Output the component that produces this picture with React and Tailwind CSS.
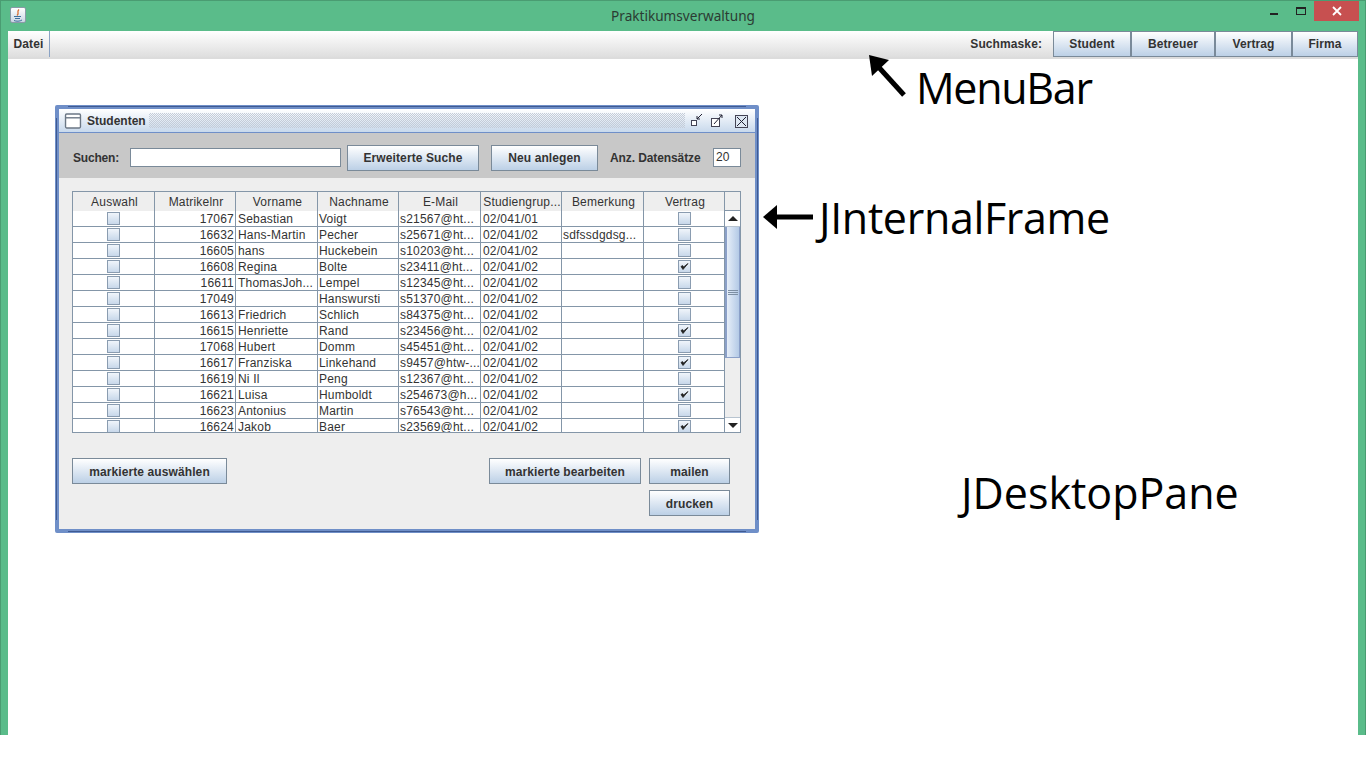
import React from "react";

const rows = [
  ["17067", "Sebastian", "Voigt", "s21567@ht...", "02/041/01", "", false],
  ["16632", "Hans-Martin", "Pecher", "s25671@ht...", "02/041/02", "sdfssdgdsg...", false],
  ["16605", "hans", "Huckebein", "s10203@ht...", "02/041/02", "", false],
  ["16608", "Regina", "Bolte", "s23411@ht...", "02/041/02", "", true],
  ["16611", "ThomasJoh...", "Lempel", "s12345@ht...", "02/041/02", "", false],
  ["17049", "", "Hanswursti", "s51370@ht...", "02/041/02", "", false],
  ["16613", "Friedrich", "Schlich", "s84375@ht...", "02/041/02", "", false],
  ["16615", "Henriette", "Rand", "s23456@ht...", "02/041/02", "", true],
  ["17068", "Hubert", "Domm", "s45451@ht...", "02/041/02", "", false],
  ["16617", "Franziska", "Linkehand", "s9457@htw-...", "02/041/02", "", true],
  ["16619", "Ni Il", "Peng", "s12367@ht...", "02/041/02", "", false],
  ["16621", "Luisa", "Humboldt", "s254673@h...", "02/041/02", "", true],
  ["16623", "Antonius", "Martin", "s76543@ht...", "02/041/02", "", false],
  ["16624", "Jakob", "Baer", "s23569@ht...", "02/041/02", "", true],
];

const heads = ["Auswahl", "Matrikelnr", "Vorname", "Nachname", "E-Mail", "Studiengrup...", "Bemerkung", "Vertrag"];
const cols = "grid grid-cols-[82px_81px_82px_81px_82px_81px_82px_81px]";
const btn = "h-[26px] pt-px flex items-center justify-center border border-[#7a8a99] bg-gradient-to-b from-white to-[#bcd0e6] text-[12px] font-bold text-[#333] tracking-[0.1px]";

function Box({ checked }) {
  return (
    <div className="w-[13px] h-[13px] border border-[#8a9cb0] bg-gradient-to-b from-[#f0f5fb] to-[#c8d8ea] flex items-center justify-center">
      {checked && (
        <svg width="9" height="9" viewBox="0 0 9 9">
          <path d="M1 4.5 L3 7.5 L8 1.5 L3.6 5 L2.6 3.6 Z" fill="#222" stroke="#222" strokeWidth="0.8" />
        </svg>
      )}
    </div>
  );
}

function Cell({ children, className = "pl-[1px] pr-[2px]" }) {
  return (
    <div className={"h-[16px] bg-white border-b border-r border-[#8496a8] leading-[17px] whitespace-nowrap overflow-hidden " + className}>
      {children}
    </div>
  );
}

function JavaIcon() {
  return (
    <div className="w-[16px] h-[16px] rounded-[2px] border border-[#8a9aa8] bg-gradient-to-b from-white to-[#c9d6e4] flex items-center justify-center">
      <svg width="12" height="13" viewBox="0 0 12 13">
        <path d="M7 0.5 C4 3 8 4 5 6.5" fill="none" stroke="#d8682a" strokeWidth="1.3" />
        <path d="M2 7.5 H9 M3 9.5 H8 M2 11.5 C4 12.5 8 12.5 10 11" fill="none" stroke="#3f6f9c" strokeWidth="1" />
      </svg>
    </div>
  );
}

function Frame() {
  return (
    <div className="absolute left-[47px] top-[46px] w-[704px] h-[428px] border-[4px] border-[#6f8fc8] rounded-[2px] flex flex-col bg-[#eeeeee] text-[12px] text-[#333] font-['Liberation_Sans',Arial,sans-serif]">
      <div className="absolute top-[-3px] left-[9px] right-[9px] h-px bg-[#3f5a92]" />
      <div className="absolute bottom-[-3px] left-[9px] right-[9px] h-px bg-[#3f5a92]" />
      <div className="absolute left-[-3px] top-[9px] bottom-[9px] w-px bg-[#3f5a92]" />
      <div className="absolute right-[-3px] top-[9px] bottom-[9px] w-px bg-[#3f5a92]" />
      <div className="h-[24px] shrink-0 border-b border-[#6f8fc8] bg-gradient-to-b from-white to-[#c8d9ec] flex items-center pl-[5px] pr-[6px]">
        <svg width="18" height="16" viewBox="0 0 16 15" className="shrink-0">
          <rect x="1" y="1" width="14" height="13" rx="1" fill="#fff" stroke="#6b7785" strokeWidth="1.3" />
          <path d="M1 4.5 H15" stroke="#6b7785" strokeWidth="1.3" />
        </svg>
        <span className="ml-[5px] w-[58px] font-bold text-[#333]">Studenten</span>
        <div className="ml-[4px] flex-1 h-[15px] bg-[conic-gradient(#c4ccd8_25%,transparent_0_50%,#c4ccd8_0_75%,transparent_0)] bg-[length:2px_2px]" />
        <svg width="60" height="18" viewBox="0 0 60 18" className="shrink-0 ml-[4px]">
          <rect x="2.5" y="8.5" width="5" height="5" fill="#fff" stroke="#445" />
          <path d="M8 7 L13 2 M8 7 H11 M8 7 V4" stroke="#223" fill="none" />
          <rect x="22.5" y="6.5" width="8" height="8" fill="#fff" stroke="#445" />
          <path d="M25 12 L33 3 M33 3 H30 M33 3 V6" stroke="#223" fill="none" />
          <rect x="46.5" y="3.5" width="12" height="12" fill="#dde7f2" stroke="#445" />
          <path d="M48 5 L57 14 M57 5 L48 14" stroke="#223" />
        </svg>
      </div>
      <div className="h-[45px] shrink-0 bg-[#c8c8c8] flex items-center pl-[14px] pt-[4px] font-bold text-[#333]">
        <span className="w-[57px] tracking-[-0.2px]">Suchen:</span>
        <div className="w-[211px] h-[19px] bg-white border border-[#7a8a99]" />
        <div className={btn + " w-[132px] ml-[6px]"}>Erweiterte Suche</div>
        <div className={btn + " w-[107px] ml-[12px]"}>Neu anlegen</div>
        <span className="ml-[12px] w-[103px] tracking-[-0.1px]">Anz. Datensätze</span>
        <div className="w-[28px] h-[19px] bg-white border border-[#7a8a99] font-normal px-[2px] leading-[17px]">20</div>
      </div>
      <div className="ml-[13px] mt-[13px] w-[669px] h-[242px] flex border border-[#8496a8] overflow-hidden shrink-0 tracking-[0.2px]">
        <div className="w-[652px] shrink-0">
          <div className={cols + " h-[19px]"}>
            {heads.map((h) => (
              <div key={h} className="border-r border-b border-[#8496a8] bg-[#eeeeee] text-center leading-[20px] whitespace-nowrap pl-[2px]">{h}</div>
            ))}
          </div>
          {rows.map((r) => (
            <div key={r[0]} className={cols}>
              <Cell className="flex justify-center items-start pt-[1px]"><Box /></Cell>
              <Cell className="text-right pr-[1px]">{r[0]}</Cell>
              <Cell className="pl-[2px] pr-[1px]">{r[1]}</Cell>
              <Cell>{r[2]}</Cell>
              <Cell>{r[3]}</Cell>
              <Cell className="pl-[2px] pr-[1px]">{r[4]}</Cell>
              <Cell>{r[5]}</Cell>
              <Cell className="flex justify-center pl-[1px] items-start pt-[1px]"><Box checked={r[6]} /></Cell>
            </div>
          ))}
        </div>
        <div className="flex-1 flex flex-col bg-[#eeeeee]">
          <div className="h-[19px] border-b border-[#8496a8] shrink-0" />
          <div className="h-[16px] shrink-0 bg-white flex items-center justify-center border-b border-[#b8c4d0]">
            <div className="w-0 h-0 border-x-[5px] border-x-transparent border-b-[5px] border-b-[#222]" />
          </div>
          <div className="h-[131px] shrink-0 bg-gradient-to-r from-[#e6eef8] to-[#b4cae6] border-l-2 border-b border-r border-[#8ba0c8] flex flex-col items-center justify-center gap-[1px]">
            <div className="w-[10px] h-px bg-[#7d8fa3]" />
            <div className="w-[10px] h-px bg-[#7d8fa3]" />
            <div className="w-[10px] h-px bg-[#7d8fa3]" />
          </div>
          <div className="flex-1" />
          <div className="h-[15px] shrink-0 bg-white flex items-center justify-center border-t border-[#b8c4d0]">
            <div className="w-0 h-0 border-x-[5px] border-x-transparent border-t-[5px] border-t-[#222]" />
          </div>
        </div>
      </div>
      <div className="mt-[25px] ml-[13px] mr-[25px] flex items-start">
        <div className={btn + " w-[155px]"}>markierte auswählen</div>
        <div className="flex-1" />
        <div className="flex flex-col items-end gap-[6px]">
          <div className="flex gap-[8px]">
            <div className={btn + " w-[152px]"}>markierte bearbeiten</div>
            <div className={btn + " w-[81px]"}>mailen</div>
          </div>
          <div className={btn + " w-[81px]"}>drucken</div>
        </div>
      </div>
    </div>
  );
}

export default function App() {
  return (
    <div className="w-[1366px] h-[768px] bg-white overflow-hidden">
      <div className="h-[735px] flex flex-col bg-[#5abc8a] px-[7px] border-t border-x border-[#4a9c72]">
        <div className="h-[30px] shrink-0 relative flex items-center justify-center text-[13.6px] text-[#2b3b33] font-['Noto_Sans',Arial,sans-serif]">
          <div className="absolute left-[2px] top-[6px]"><JavaIcon /></div>
          <span>Praktikumsverwaltung</span>
          <div className="absolute right-[-1px] top-0 h-[20px] flex items-center">
            <div className="w-[8px] h-[2px] bg-[#222] mt-[6px] mr-[18px]" />
            <div className="w-[10px] h-[8px] border border-[#222] border-t-2 mr-[8px]" />
            <div className="w-[45px] h-[20px] bg-[#c75050] flex items-center justify-center text-white">
              <svg width="10" height="10" viewBox="0 0 10 10"><path d="M1 1 L9 9 M9 1 L1 9" stroke="#fff" strokeWidth="1.8" /></svg>
            </div>
          </div>
        </div>
        <div className="flex-1 bg-white flex flex-col min-h-0">
          <div className="h-[28px] shrink-0 border-b-2 border-[#dcdcdc] bg-gradient-to-b from-white to-[#dedede] flex items-stretch text-[12px] font-bold text-[#333] font-['Liberation_Sans',Arial,sans-serif] tracking-[0.1px]">
            <div className="w-[42px] border-r border-[#8ba3c4] flex items-center justify-center">Datei</div>
            <div className="flex-1" />
            <div className="flex items-center mr-[11px]">Suchmaske:</div>
            {[["Student", 78], ["Betreuer", 84], ["Vertrag", 77], ["Firma", 66]].map(([t, w]) => (
              <div key={t} style={{ width: w }} className="h-[26px] flex items-center justify-center border border-[#7a8a99] bg-gradient-to-b from-white to-[#bcd0e6]">{t}</div>
            ))}
          </div>
          <div className="flex-1 relative">
            <Frame />
            <div className="absolute inset-0 pointer-events-none font-['Open_Sans',sans-serif] text-black text-[43px] leading-none">
              <span className="absolute left-[908px] top-[7px] tracking-[-1.3px]">MenuBar</span>
              <span className="absolute left-[811px] top-[137px] tracking-[-0.35px]">JInternalFrame</span>
              <span className="absolute left-[953px] top-[412px]">JDesktopPane</span>
              <svg className="absolute left-[858px] top-[-6px]" width="42" height="46" viewBox="0 0 42 46">
                <path d="M38 42 L8 9" stroke="#000" strokeWidth="5" />
                <path d="M3 2 L23 7 L6 23 Z" fill="#000" />
              </svg>
              <svg className="absolute left-[754px] top-[143px]" width="52" height="30" viewBox="0 0 52 30">
                <path d="M12 15 H51" stroke="#000" strokeWidth="5" />
                <path d="M1 15 L15 3 V27 Z" fill="#000" />
              </svg>
            </div>
          </div>
        </div>
      </div>
    </div>
  );
}
